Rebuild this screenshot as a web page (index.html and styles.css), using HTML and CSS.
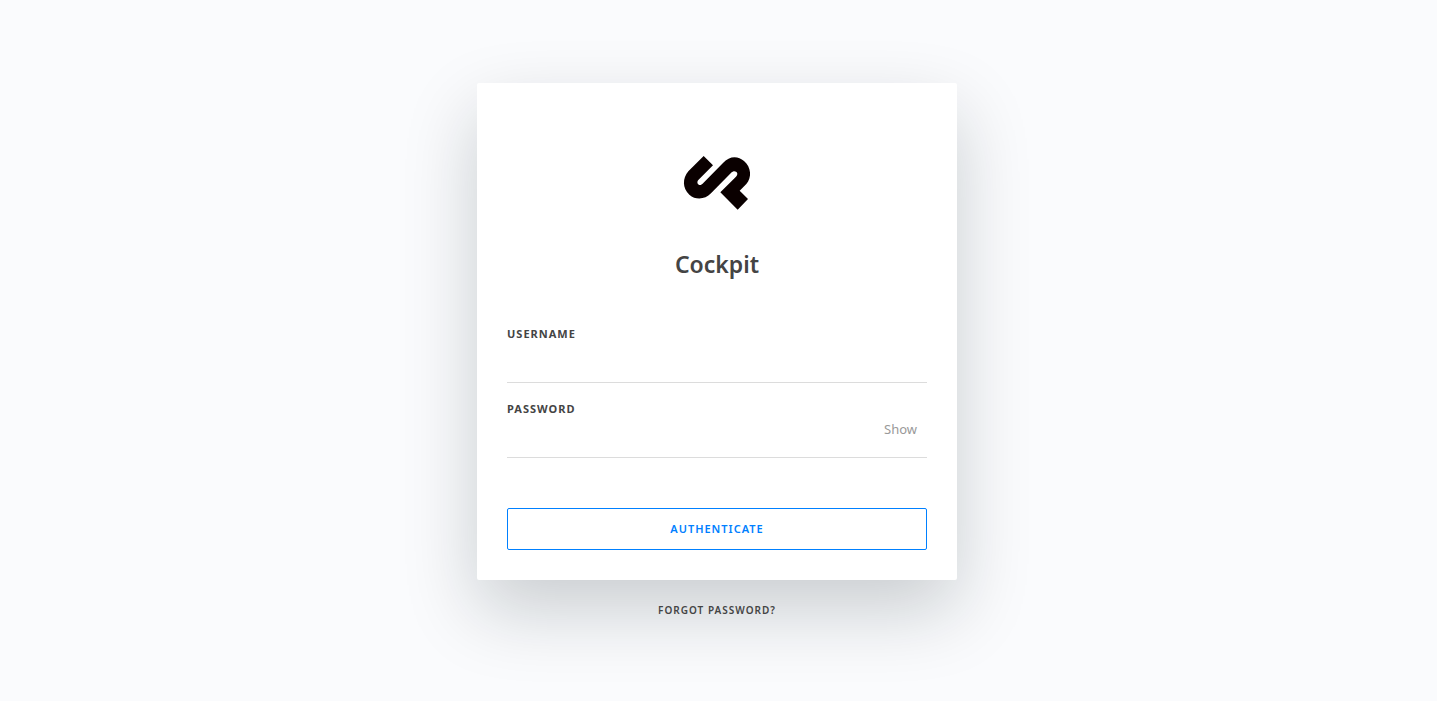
FILE: index.html
```html
<!DOCTYPE html>
<html lang="en">
<head>
<meta charset="utf-8">
<meta name="viewport" content="width=device-width, initial-scale=1">
<title>Authenticate Please!</title>
<link rel="stylesheet" href="styles.css">
</head>
<body class="page">
<main class="login">
  <form class="card">
    <svg class="logo" viewBox="0 0 282 225" aria-hidden="true">
      <path fill="#0a0000" d="M101 33 L129 61 L85 105 C79 112 83 121 92 120 L97 117 L159 54 C178 32 204 32 222 48 C244 67 246 98 229 117 L209 137 L234 162 L203 194 L151 142 L198 95 C206 87 201 78 191 79 L185 82 L123 145 C105 164 77 166 58 149 C37 130 37 100 55 79 Z"/>
    </svg>
    <h1 class="title">Cockpit</h1>
    <div class="field">
      <label class="label" for="username">Username</label>
      <input class="input" id="username" type="text">
    </div>
    <div class="field">
      <label class="label" for="password">Password</label>
      <div class="password">
        <input class="input" id="password" type="password">
        <button class="toggle" type="button">Show</button>
      </div>
    </div>
    <button class="submit" type="button">Authenticate</button>
  </form>
  <a class="forgot" href="#">Forgot Password?</a>
</main>
</body>
</html>
```
FILE: styles.css
```css
* { box-sizing: border-box; }

.page {
  margin: 0;
  min-height: 100vh;
  padding-right: 3px;
  display: flex;
  align-items: center;
  justify-content: center;
  background: #fafbfd;
  color: #444;
  font-family: "Noto Sans", "Open Sans", sans-serif;
}

.login {
  width: 100%;
  max-width: 480px;
  display: flex;
  flex-direction: column;
  align-items: center;
  gap: 22px;
}

.card {
  width: 100%;
  padding: 62px 30px 30px;
  display: flex;
  flex-direction: column;
  background: #fff;
  border-radius: 2px;
  box-shadow: 0 30px 75px 0 rgba(10, 25, 30, 0.2);
}

.logo {
  width: 94px;
  height: 75px;
  align-self: center;
}

.title {
  margin: 26px 0 26px;
  font-size: 23px;
  line-height: 36px;
  font-weight: 600;
  text-align: center;
}

.field {
  display: flex;
  flex-direction: column;
  margin-top: 18px;
}

.label {
  font-size: 11px;
  line-height: 16px;
  font-weight: 700;
  letter-spacing: 1px;
  text-transform: uppercase;
}

.input {
  display: block;
  width: 100%;
  height: 41px;
  padding: 0;
  border: 0;
  border-bottom: 1px solid #dcdcdc;
  background: transparent;
  color: inherit;
  font: inherit;
  outline: none;
}

.password { position: relative; }

.toggle {
  position: absolute;
  top: 2px;
  right: 10px;
  padding: 0;
  border: 0;
  background: transparent;
  color: #999;
  font: 13px/20px "Noto Sans", "Open Sans", sans-serif;
}

.submit {
  height: 42px;
  margin-top: 50px;
  border: 1px solid #0080ff;
  border-radius: 2px;
  background: transparent;
  color: #0080ff;
  font: 600 11px/16px "Noto Sans", "Open Sans", sans-serif;
  letter-spacing: 1px;
  text-transform: uppercase;
}

.forgot {
  color: #444;
  font-size: 10px;
  line-height: 16px;
  font-weight: 600;
  letter-spacing: 1px;
  text-decoration: none;
  text-transform: uppercase;
}
```
